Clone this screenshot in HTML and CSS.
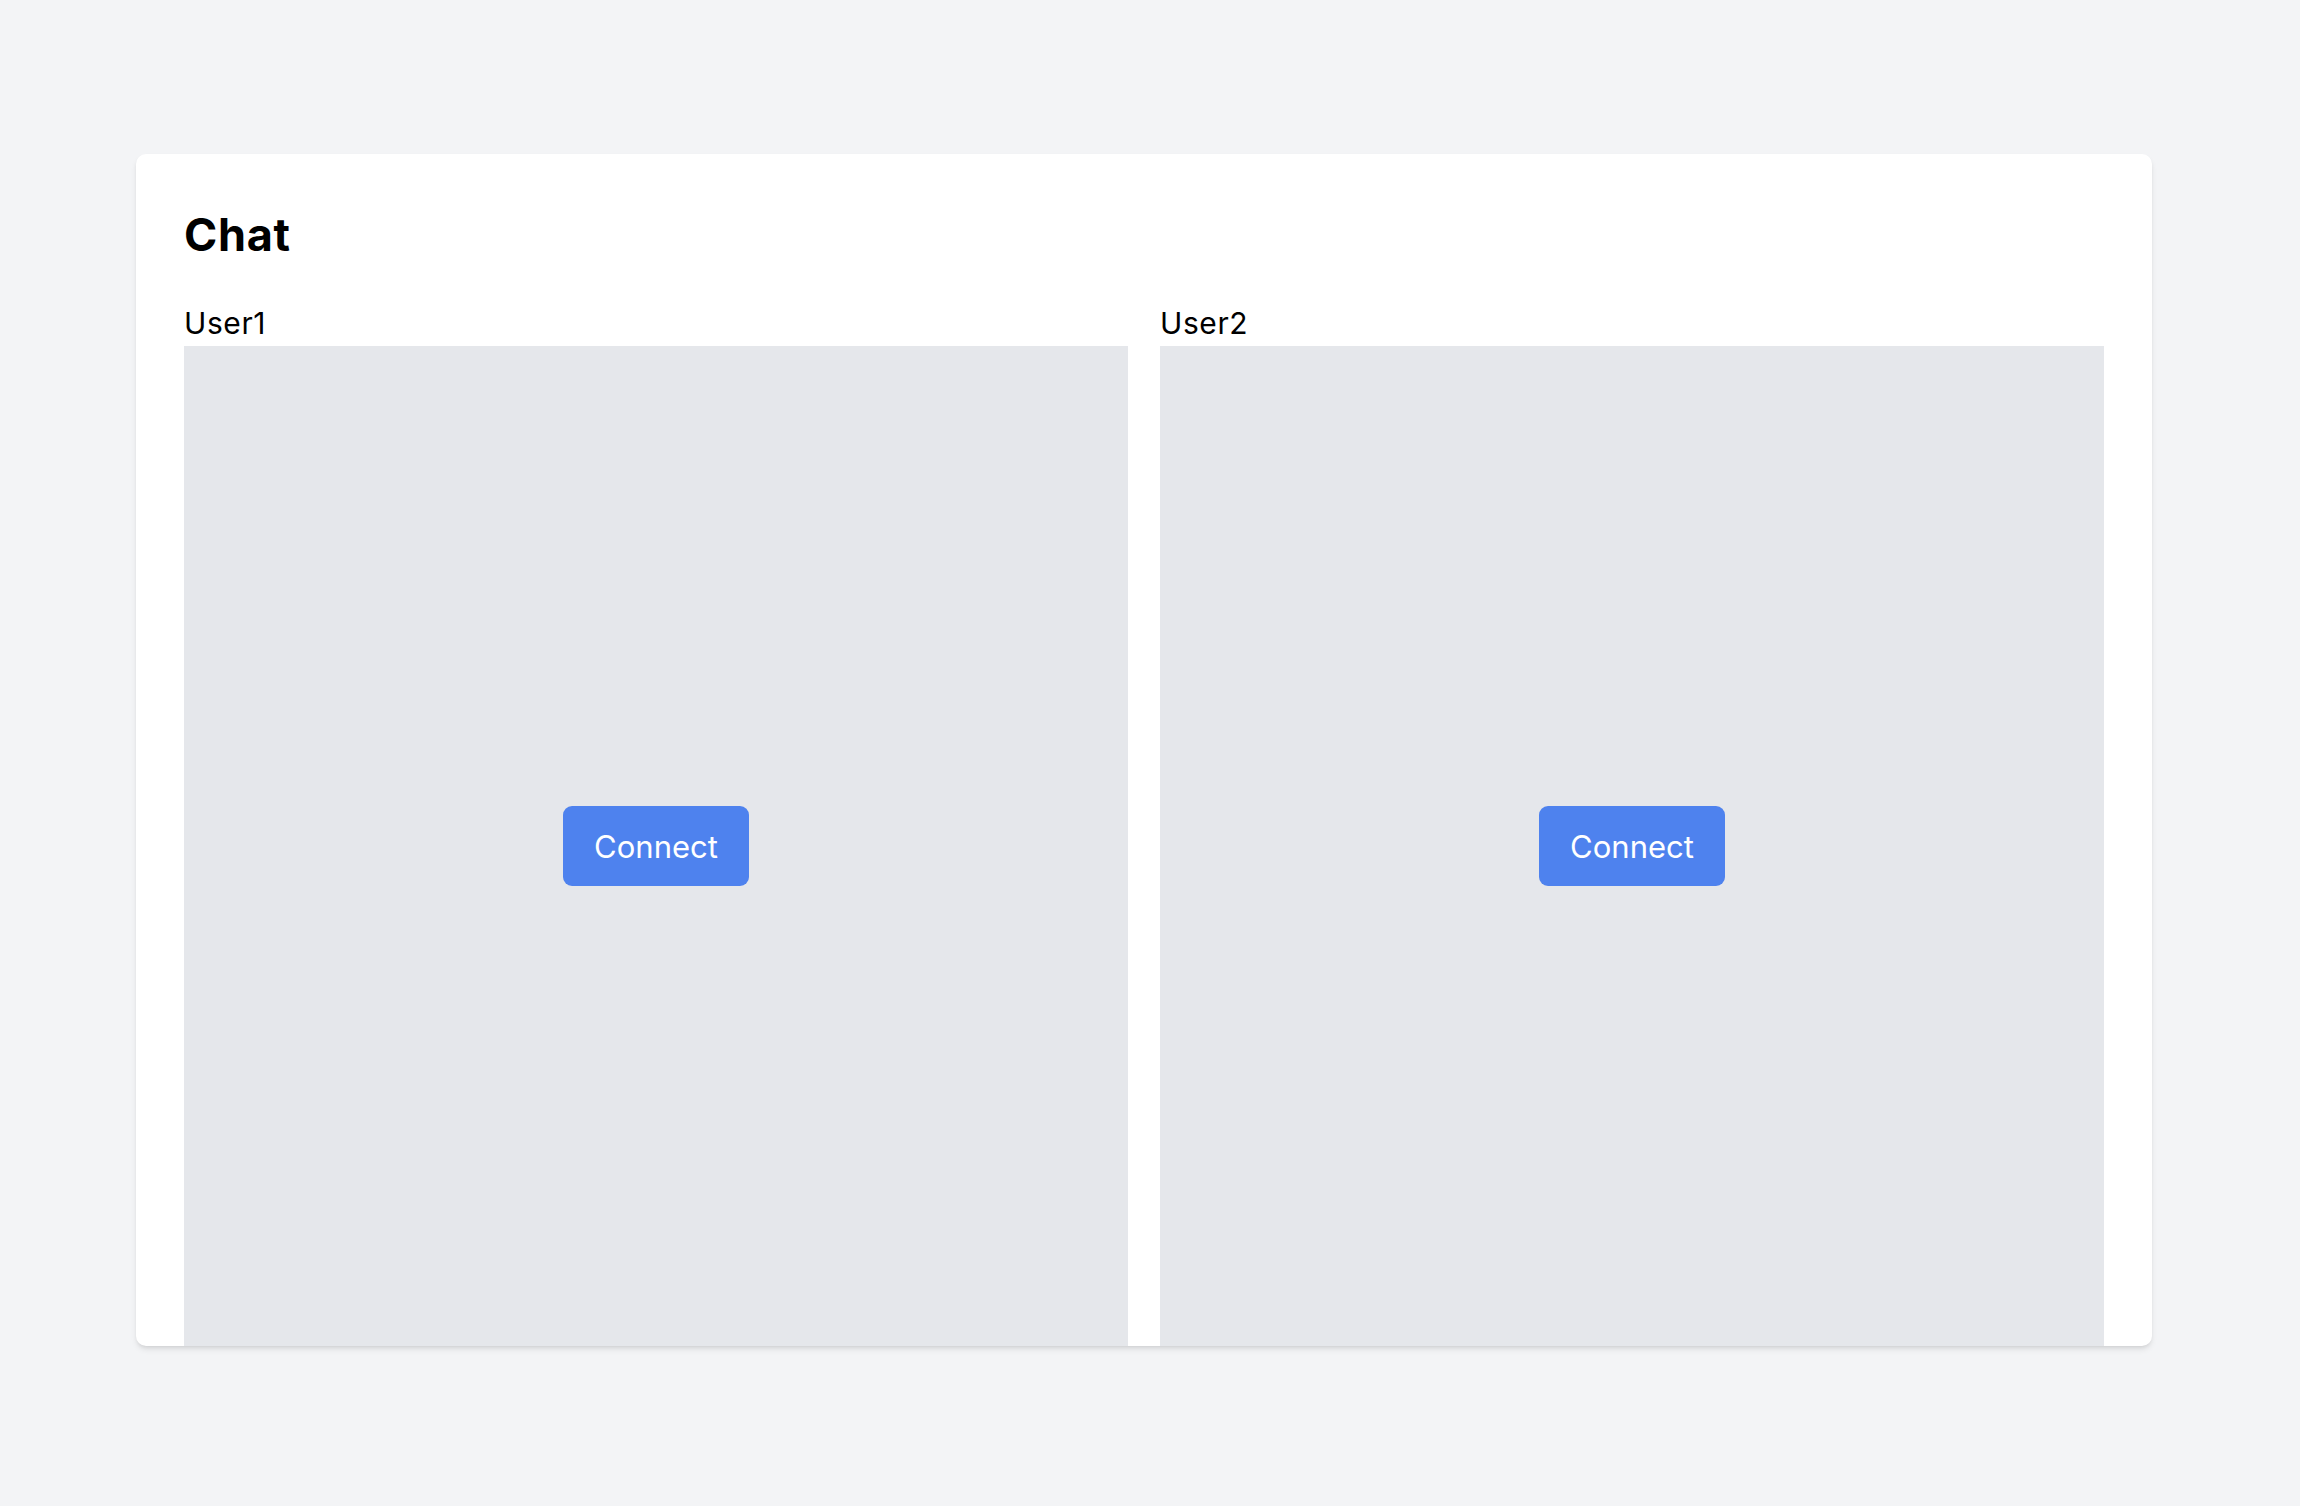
FILE: index.html
```html
<!DOCTYPE html>
<html>
<head>
<meta charset="utf-8">
<link rel="stylesheet" href="styles.css">
</head>
<body>
<div class="card">
  <h1 class="title">Chat</h1>
  <div class="columns">
    <div class="column">
      <div class="label">User1</div>
      <div class="panel"><button class="btn">Connect</button></div>
    </div>
    <div class="column">
      <div class="label">User2</div>
      <div class="panel"><button class="btn">Connect</button></div>
    </div>
  </div>
</div>
</body>
</html>
```
FILE: styles.css
```css
html, body {
  margin: 0;
  padding: 0;
  background: #f3f4f6;
  font-family: Inter, "Liberation Sans", sans-serif;
  color: #000;
}
body {
  padding: 154px 148px 160px 136px;
}
.card {
  background: #fff;
  border-radius: 10px;
  box-shadow: 0 4px 6px -1px rgba(0,0,0,0.1), 0 2px 4px -2px rgba(0,0,0,0.1);
  padding: 48px 48px 0 48px;
  overflow: hidden;
}
.title {
  margin: 0;
  font-size: 45px;
  line-height: 54px;
  font-weight: 700;
  letter-spacing: 0.7px;
  margin-top: 6px;
  margin-bottom: 39px;
}
.columns {
  display: grid;
  grid-template-columns: 1fr 1fr;
  gap: 32px;
}
.label {
  font-size: 30px;
  line-height: 45px;
  letter-spacing: 0.6px;
}
.panel {
  background: #e5e7eb;
  height: 1000px;
  display: flex;
  align-items: center;
  justify-content: center;
}
.btn {
  background: #4e82ee;
  color: #fff;
  border: none;
  border-radius: 9px;
  width: 186px;
  height: 80px;
  font-family: Inter, "Liberation Sans", sans-serif;
  font-size: 31px;
  padding: 0;
}
```
